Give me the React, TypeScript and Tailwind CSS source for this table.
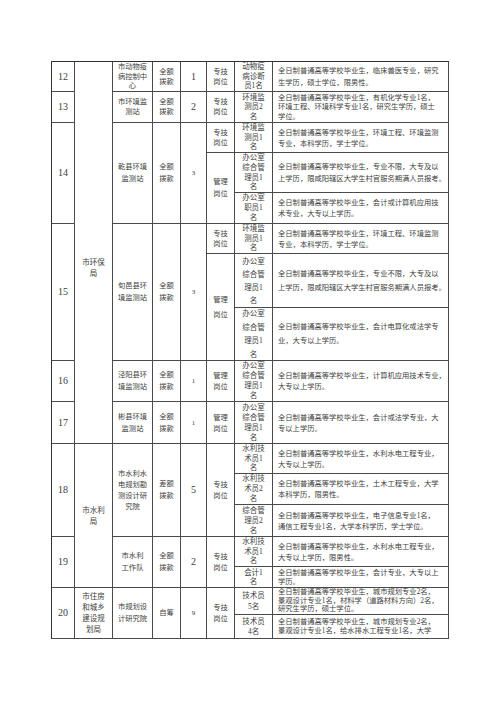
import React from "react";

type CP = {
  pos: string;
  lines: string[];
  cls?: string;
  left?: boolean;
};

function Cell({ pos, lines, cls = "", left = false }: CP) {
  return (
    <div
      className={
        "border-r border-b border-[#4a4a4a] flex flex-col justify-center overflow-hidden text-[#404040] " +
        (left ? "items-start text-left pl-[5px] " : "items-center text-center ") +
        pos +
        " " +
        cls
      }
    >
      {lines.map((l, i) => (
        <div key={i} className="whitespace-nowrap">
          {l}
        </div>
      ))}
    </div>
  );
}

const S = "text-[7.3px] leading-[10px]";
const N = "text-[10px] leading-[10px]";
const D = "text-[7.5px]";

export default function App() {
  return (
    <div className="w-[500px] h-[708px] bg-white pt-[61px] pl-[51px] font-[family-name:'Liberation_Serif','Noto_Sans_CJK_SC',serif]">
      <div className="grid w-max border-l border-t border-[#333] grid-cols-[23px_38px_40px_28px_26px_28px_38px_176px] grid-rows-[30px_31px_30px_40px_31px_30px_54px_53px_41px_42px_30px_31px_32px_30px_21px_27px_24px]">
        {/* Column 1 */}
        <Cell pos="col-start-1 row-start-1 row-span-1" lines={["12"]} cls={N} />
        <Cell pos="col-start-1 row-start-2 row-span-1" lines={["13"]} cls={N} />
        <Cell pos="col-start-1 row-start-3 row-span-3" lines={["14"]} cls={N} />
        <Cell pos="col-start-1 row-start-6 row-span-3" lines={["15"]} cls={N} />
        <Cell pos="col-start-1 row-start-9 row-span-1" lines={["16"]} cls={N} />
        <Cell pos="col-start-1 row-start-10 row-span-1" lines={["17"]} cls={N} />
        <Cell pos="col-start-1 row-start-11 row-span-3" lines={["18"]} cls={N} />
        <Cell pos="col-start-1 row-start-14 row-span-2" lines={["19"]} cls={N} />
        <Cell pos="col-start-1 row-start-16 row-span-2" lines={["20"]} cls={N} />

        {/* Column 2 */}
        <Cell pos="col-start-2 row-start-1 row-span-10" lines={["市环保", "局"]} cls={"text-[7.5px] leading-[11px] pt-[31px]"} />
        <Cell pos="col-start-2 row-start-11 row-span-5" lines={["市水利", "局"]} cls={"text-[7.5px] leading-[11px]"} />
        <Cell pos="col-start-2 row-start-16 row-span-2" lines={["市住房", "和城乡", "建设规", "划局"]} cls={"text-[7.5px] leading-[11px]"} />

        {/* Column 3 */}
        <Cell pos="col-start-3 row-start-1 row-span-1" lines={["市动物疫", "病控制中", "心"]} cls={"text-[7.3px] leading-[9.5px]"} />
        <Cell pos="col-start-3 row-start-2 row-span-1" lines={["市环境监", "测站"]} cls={S} />
        <Cell pos="col-start-3 row-start-3 row-span-3" lines={["乾县环境", "监测站"]} cls={"text-[7.3px] leading-[12px]"} />
        <Cell pos="col-start-3 row-start-6 row-span-3" lines={["旬邑县环", "境监测站"]} cls={"text-[7.3px] leading-[12px]"} />
        <Cell pos="col-start-3 row-start-9 row-span-1" lines={["泾阳县环", "境监测站"]} cls={"text-[7.3px] leading-[12px]"} />
        <Cell pos="col-start-3 row-start-10 row-span-1" lines={["彬县环境", "监测站"]} cls={"text-[7.3px] leading-[12px]"} />
        <Cell pos="col-start-3 row-start-11 row-span-3" lines={["市水利水", "电规划勘", "测设计研", "究院"]} cls={"text-[7.3px] leading-[11px]"} />
        <Cell pos="col-start-3 row-start-14 row-span-2" lines={["市水利", "工作队"]} cls={"text-[7.3px] leading-[12px]"} />
        <Cell pos="col-start-3 row-start-16 row-span-2" lines={["市规划设", "计研究院"]} cls={"text-[7.3px] leading-[12px]"} />

        {/* Column 4 */}
        <Cell pos="col-start-4 row-start-1 row-span-1" lines={["全额", "拨款"]} cls={S} />
        <Cell pos="col-start-4 row-start-2 row-span-1" lines={["全额", "拨款"]} cls={S} />
        <Cell pos="col-start-4 row-start-3 row-span-3" lines={["全额", "拨款"]} cls={"text-[7.3px] leading-[12px]"} />
        <Cell pos="col-start-4 row-start-6 row-span-3" lines={["全额", "拨款"]} cls={"text-[7.3px] leading-[12px]"} />
        <Cell pos="col-start-4 row-start-9 row-span-1" lines={["全额", "拨款"]} cls={"text-[7.3px] leading-[12px]"} />
        <Cell pos="col-start-4 row-start-10 row-span-1" lines={["全额", "拨款"]} cls={"text-[7.3px] leading-[12px]"} />
        <Cell pos="col-start-4 row-start-11 row-span-3" lines={["差额", "拨款"]} cls={"text-[7.3px] leading-[12px]"} />
        <Cell pos="col-start-4 row-start-14 row-span-2" lines={["全额", "拨款"]} cls={"text-[7.3px] leading-[12px]"} />
        <Cell pos="col-start-4 row-start-16 row-span-2" lines={["自筹"]} cls={"text-[7.3px] leading-[12px]"} />

        {/* Column 5 */}
        <Cell pos="col-start-5 row-start-1 row-span-1" lines={["1"]} cls={N} />
        <Cell pos="col-start-5 row-start-2 row-span-1" lines={["2"]} cls={N} />
        <Cell pos="col-start-5 row-start-3 row-span-3" lines={["3"]} cls={"text-[7px] leading-[10px]"} />
        <Cell pos="col-start-5 row-start-6 row-span-3" lines={["3"]} cls={"text-[7px] leading-[10px]"} />
        <Cell pos="col-start-5 row-start-9 row-span-1" lines={["1"]} cls={"text-[7px] leading-[10px]"} />
        <Cell pos="col-start-5 row-start-10 row-span-1" lines={["1"]} cls={"text-[7px] leading-[10px]"} />
        <Cell pos="col-start-5 row-start-11 row-span-3" lines={["5"]} cls={N} />
        <Cell pos="col-start-5 row-start-14 row-span-2" lines={["2"]} cls={N} />
        <Cell pos="col-start-5 row-start-16 row-span-2" lines={["9"]} cls={"text-[7px] leading-[10px]"} />

        {/* Column 6 */}
        <Cell pos="col-start-6 row-start-1 row-span-1" lines={["专技", "岗位"]} cls={S} />
        <Cell pos="col-start-6 row-start-2 row-span-1" lines={["专技", "岗位"]} cls={S} />
        <Cell pos="col-start-6 row-start-3 row-span-1" lines={["专技", "岗位"]} cls={S} />
        <Cell pos="col-start-6 row-start-4 row-span-2" lines={["管理", "岗位"]} cls={"text-[7.3px] leading-[12px]"} />
        <Cell pos="col-start-6 row-start-6 row-span-1" lines={["专技", "岗位"]} cls={S} />
        <Cell pos="col-start-6 row-start-7 row-span-2" lines={["管理", "岗位"]} cls={"text-[7.3px] leading-[15px]"} />
        <Cell pos="col-start-6 row-start-9 row-span-1" lines={["管理", "岗位"]} cls={"text-[7.3px] leading-[11px]"} />
        <Cell pos="col-start-6 row-start-10 row-span-1" lines={["管理", "岗位"]} cls={"text-[7.3px] leading-[11px]"} />
        <Cell pos="col-start-6 row-start-11 row-span-3" lines={["专技", "岗位"]} cls={"text-[7.3px] leading-[11px]"} />
        <Cell pos="col-start-6 row-start-14 row-span-2" lines={["专技", "岗位"]} cls={"text-[7.3px] leading-[11px]"} />
        <Cell pos="col-start-6 row-start-16 row-span-2" lines={["专技", "岗位"]} cls={"text-[7.3px] leading-[11px]"} />

        {/* Column 7 */}
        <Cell pos="col-start-7 row-start-1" lines={["动物疫", "病诊断", "员1名"]} cls={D + " leading-[9.5px]"} />
        <Cell pos="col-start-7 row-start-2" lines={["环境监", "测员2", "名"]} cls={D + " leading-[9.5px]"} />
        <Cell pos="col-start-7 row-start-3" lines={["环境监", "测员1", "名"]} cls={D + " leading-[9.5px]"} />
        <Cell pos="col-start-7 row-start-4" lines={["办公室", "综合管", "理员1", "名"]} cls={D + " leading-[9.8px]"} />
        <Cell pos="col-start-7 row-start-5" lines={["办公室", "职员1", "名"]} cls={D + " leading-[10px]"} />
        <Cell pos="col-start-7 row-start-6" lines={["环境监", "测员1", "名"]} cls={D + " leading-[9.5px]"} />
        <Cell pos="col-start-7 row-start-7" lines={["办公室", "综合管", "理员1", "名"]} cls={D + " leading-[13px]"} />
        <Cell pos="col-start-7 row-start-8" lines={["办公室", "综合管", "理员1", "名"]} cls={D + " leading-[13.5px]"} />
        <Cell pos="col-start-7 row-start-9" lines={["办公室", "综合管", "理员1", "名"]} cls={D + " leading-[10px]"} />
        <Cell pos="col-start-7 row-start-10" lines={["办公室", "综合管", "理员1", "名"]} cls={D + " leading-[10px]"} />
        <Cell pos="col-start-7 row-start-11" lines={["水利技", "术员1", "名"]} cls={D + " leading-[9.5px]"} />
        <Cell pos="col-start-7 row-start-12" lines={["水利技", "术员2", "名"]} cls={D + " leading-[10px]"} />
        <Cell pos="col-start-7 row-start-13" lines={["综合管", "理员2", "名"]} cls={D + " leading-[10px]"} />
        <Cell pos="col-start-7 row-start-14" lines={["水利技", "术员1", "名"]} cls={D + " leading-[9.5px]"} />
        <Cell pos="col-start-7 row-start-15" lines={["会计1", "名"]} cls={D + " leading-[9.5px]"} />
        <Cell pos="col-start-7 row-start-16" lines={["技术员", "5名"]} cls={D + " leading-[11px]"} />
        <Cell pos="col-start-7 row-start-17" lines={["技术员", "4名"]} cls={D + " leading-[10px]"} />

        {/* Column 8 */}
        <Cell left pos="col-start-8 row-start-1" lines={["全日制普通高等学校毕业生，临床兽医专业，研究", "生学历，硕士学位，限男性。"]} cls="text-[7.3px] leading-[12px]" />
        <Cell left pos="col-start-8 row-start-2" lines={["全日制普通高等学校毕业生，有机化学专业1名，", "环境工程、环境科学专业1名，研究生学历，硕士", "学位。"]} cls="text-[7.3px] leading-[9.5px]" />
        <Cell left pos="col-start-8 row-start-3" lines={["全日制普通高等学校毕业生，环境工程、环境监测", "专业，本科学历，学士学位。"]} cls="text-[7.3px] leading-[11px]" />
        <Cell left pos="col-start-8 row-start-4" lines={["全日制普通高等学校毕业生，专业不限，大专及以", "上学历，限咸阳辖区大学生村官服务期满人员报考。", " "]} cls="text-[7.3px] leading-[11.5px]" />
        <Cell left pos="col-start-8 row-start-5" lines={["全日制普通高等学校毕业生，会计或计算机应用技", "术专业，大专以上学历。"]} cls="text-[7.3px] leading-[11px]" />
        <Cell left pos="col-start-8 row-start-6" lines={["全日制普通高等学校毕业生，环境工程、环境监测", "专业，本科学历，学士学位。"]} cls="text-[7.3px] leading-[11px]" />
        <Cell left pos="col-start-8 row-start-7" lines={["全日制普通高等学校毕业生，专业不限，大专及以", "上学历，限咸阳辖区大学生村官服务期满人员报考。"]} cls="text-[7.3px] leading-[14px]" />
        <Cell left pos="col-start-8 row-start-8" lines={["全日制普通高等学校毕业生，会计电算化或法学专", "业，大专以上学历。"]} cls="text-[7.3px] leading-[14px]" />
        <Cell left pos="col-start-8 row-start-9" lines={["全日制普通高等学校毕业生，计算机应用技术专业，", "大专以上学历。"]} cls="text-[7.3px] leading-[11px]" />
        <Cell left pos="col-start-8 row-start-10" lines={["全日制普通高等学校毕业生，会计或法学专业，大", "专以上学历。"]} cls="text-[7.3px] leading-[11px]" />
        <Cell left pos="col-start-8 row-start-11" lines={["全日制普通高等学校毕业生，水利水电工程专业，", "大专以上学历。"]} cls="text-[7.3px] leading-[11px]" />
        <Cell left pos="col-start-8 row-start-12" lines={["全日制普通高等学校毕业生，土木工程专业，大学", "本科学历，限男性。"]} cls="text-[7.3px] leading-[11px]" />
        <Cell left pos="col-start-8 row-start-13" lines={["全日制普通高等学校毕业生，电子信息专业1名，", "通信工程专业1名，大学本科学历，学士学位。"]} cls="text-[7.3px] leading-[11px]" />
        <Cell left pos="col-start-8 row-start-14" lines={["全日制普通高等学校毕业生，水利水电工程专业，", "大专以上学历，限男性。"]} cls="text-[7.3px] leading-[11px]" />
        <Cell left pos="col-start-8 row-start-15" lines={["全日制普通高等学校毕业生，会计专业，大专以上", "学历。"]} cls="text-[7.3px] leading-[9px]" />
        <Cell left pos="col-start-8 row-start-16" lines={["全日制普通高等学校毕业生，城市规划专业2名，", "景观设计专业1名，材料学（道路材料方向）2名，", "研究生学历，硕士学位。"]} cls="text-[7.3px] leading-[8.8px]" />
        <Cell left pos="col-start-8 row-start-17 !justify-start pt-[2px]" lines={["全日制普通高等学校毕业生，城市规划专业2名，", "景观设计专业1名，给水排水工程专业1名，大学"]} cls="text-[7.3px] leading-[9px]" />
      </div>
    </div>
  );
}
